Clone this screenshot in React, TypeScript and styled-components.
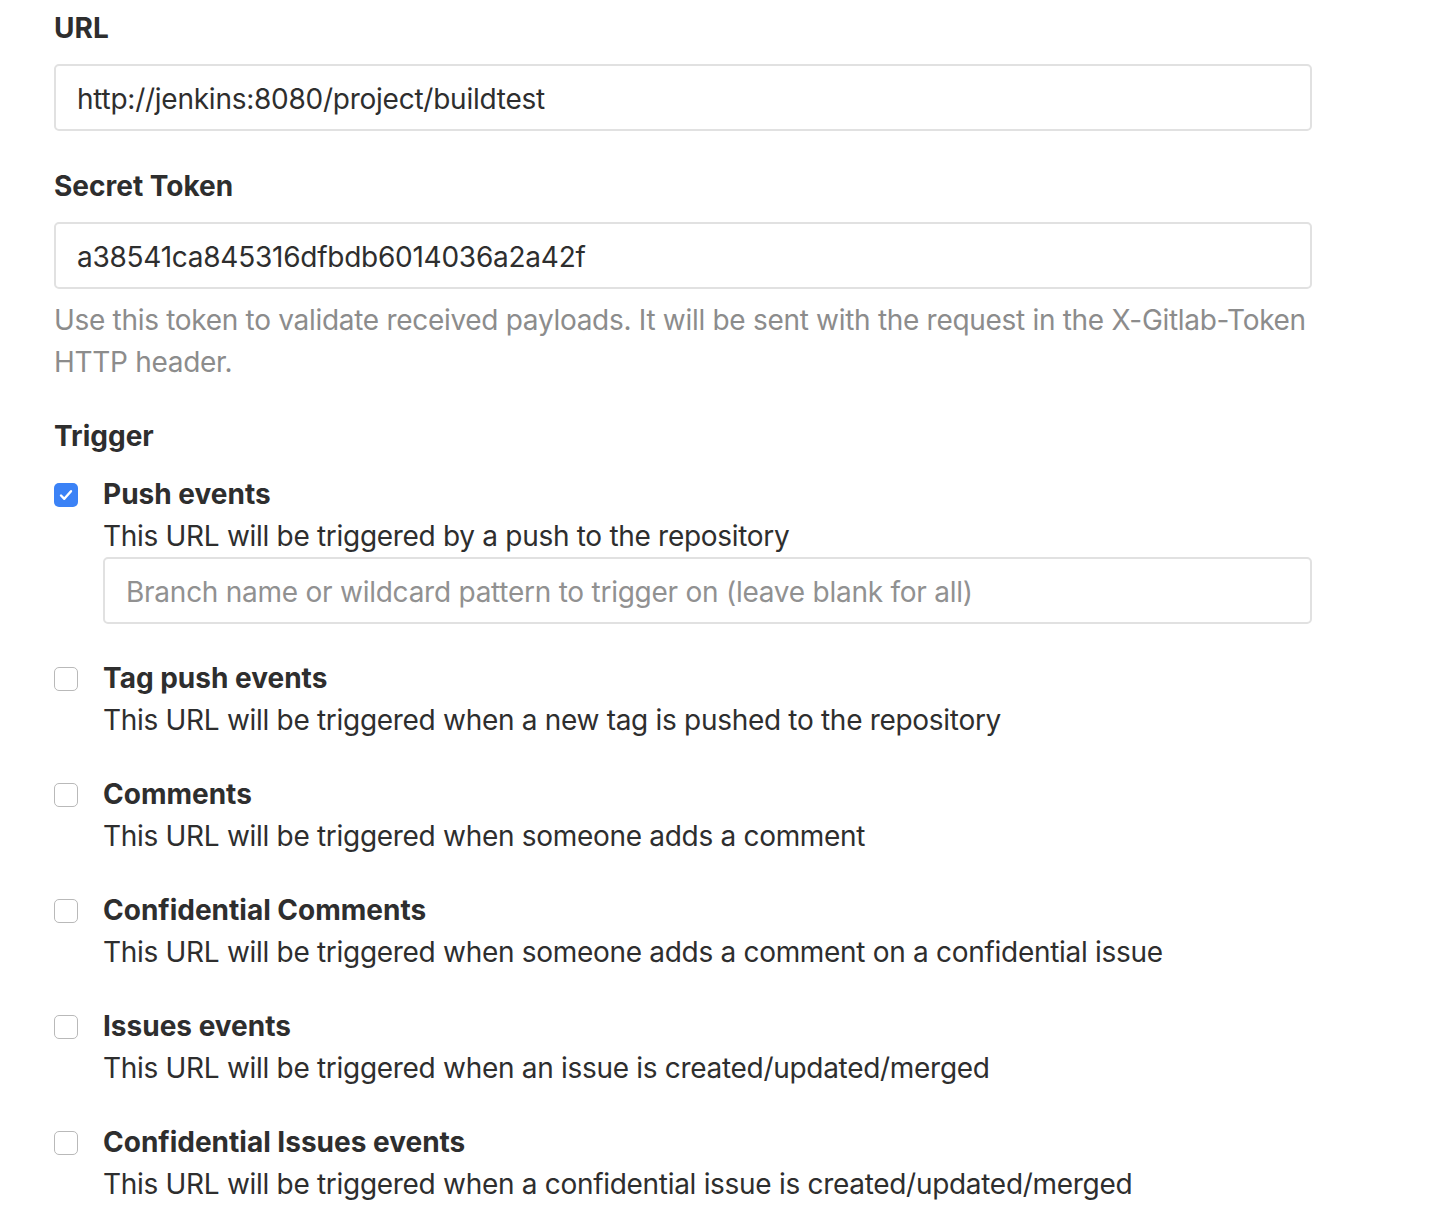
import React from "react";
import styled, { createGlobalStyle } from "styled-components";

const Global = createGlobalStyle`
  html, body { margin: 0; padding: 0; background: #fff; }
  body { font-family: Inter, "Noto Sans", sans-serif; color: #2e2e2e; }
  * { box-sizing: border-box; }
`;

const Page = styled.div`
  padding: 7px 0 0 54px;
  width: 1312px;
`;

const Group = styled.div<{ $gap?: number }>`
  margin-bottom: ${(p) => p.$gap ?? 34}px;
`;

const Label = styled.div`
  font-size: 28px;
  line-height: 42px;
  font-weight: 700;
  color: #2e2e2e;
  margin-bottom: 15px;
`;

const TriggerLabel = styled(Label)`
  margin-bottom: 16px;
`;

const Field = styled.div<{ $placeholder?: boolean }>`
  height: 67px;
  border: 2px solid #e1e1e1;
  border-radius: 5px;
  padding: 3px 21px 0;
  display: flex;
  align-items: center;
  font-size: 28px;
  letter-spacing: -0.25px;
  color: ${(p) => (p.$placeholder ? "#919191" : "#2e2e2e")};
  background: #fff;
`;

const BranchField = styled(Field)`
  margin-bottom: 1px;
`;

const Help = styled.div`
  margin-top: 10px;
  font-size: 28px;
  line-height: 42px;
  letter-spacing: -0.3px;
  color: #8c8c8c;
`;

const Item = styled.div`
  display: flex;
  gap: 25px;
  margin-bottom: 32px;
`;

const Box = styled.div<{ $checked?: boolean }>`
  width: 24px;
  height: 24px;
  margin-top: 10px;
  flex: none;
  border-radius: 5px;
  border: ${(p) => (p.$checked ? "none" : "1.5px solid #b9b9b9")};
  background: ${(p) => (p.$checked ? "#3b82f6" : "#fff")};
  display: flex;
  align-items: center;
  justify-content: center;
`;

const ItemBody = styled.div`
  flex: 1;
`;

const ItemTitle = styled.div`
  font-size: 28px;
  line-height: 42px;
  font-weight: 700;
`;

const ItemDesc = styled.div`
  font-size: 28px;
  line-height: 42px;
  letter-spacing: -0.3px;
`;

const triggers = [
  { title: "Push events", desc: "This URL will be triggered by a push to the repository", checked: true, branch: true },
  { title: "Tag push events", desc: "This URL will be triggered when a new tag is pushed to the repository" },
  { title: "Comments", desc: "This URL will be triggered when someone adds a comment" },
  { title: "Confidential Comments", desc: "This URL will be triggered when someone adds a comment on a confidential issue" },
  { title: "Issues events", desc: "This URL will be triggered when an issue is created/updated/merged" },
  { title: "Confidential Issues events", desc: "This URL will be triggered when a confidential issue is created/updated/merged" },
];

export default function App() {
  return (
    <Page>
      <Global />
      <Group>
        <Label>URL</Label>
        <Field>http://jenkins:8080/project/buildtest</Field>
      </Group>
      <Group $gap={32}>
        <Label>Secret Token</Label>
        <Field>a38541ca845316dfbdb6014036a2a42f</Field>
        <Help>
          Use this token to validate received payloads. It will be sent with the request in the X-Gitlab-Token HTTP header.
        </Help>
      </Group>
      <TriggerLabel>Trigger</TriggerLabel>
      {triggers.map((t) => (
        <Item key={t.title}>
          <Box $checked={t.checked}>
            {t.checked && (
              <svg width="18" height="18" viewBox="0 0 18 18">
                <path d="M4 9.5l3.3 3.3L14 5.2" fill="none" stroke="#fff" strokeWidth="2.4" strokeLinecap="round" strokeLinejoin="round" />
              </svg>
            )}
          </Box>
          <ItemBody>
            <ItemTitle>{t.title}</ItemTitle>
            <ItemDesc>{t.desc}</ItemDesc>
            {t.branch && (
              <BranchField $placeholder>Branch name or wildcard pattern to trigger on (leave blank for all)</BranchField>
            )}
          </ItemBody>
        </Item>
      ))}
    </Page>
  );
}
